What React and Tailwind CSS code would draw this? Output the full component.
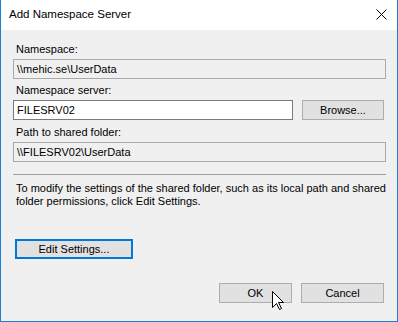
import React from 'react';

const font = { fontFamily: '"Liberation Sans", Arial, sans-serif' };

const Field = ({ label, value, top, children }) => (
    <div className={`flex flex-col ${top}`}>
        <div className="h-[13px] leading-[13px] text-[11px] pl-[3px] mb-[3px]">{label}</div>
        {children || (
            <div className="h-[20px] border border-[#a9a9a9] bg-[#f0f0f0] flex items-center pl-[3px] text-[11px] leading-none">{value}</div>
        )}
    </div>
);

const Button = ({ children, className = '' }) => (
    <button className={`h-[20px] bg-[#e1e1e1] border border-[#adadad] text-[11px] leading-none text-black flex items-center justify-center ${className}`}>
        {children}
    </button>
);

export default function App() {
    return (
        <div className="w-[398px] h-[322px] flex flex-col border-x border-b border-[#1c7fd6] bg-[#f0f0f0] text-black relative" style={font}>
            {/* Title bar */}
            <div className="h-[30px] bg-white flex items-center justify-between pl-[8px] pr-[10px] shrink-0">
                <span className="text-[11.5px]">Add Namespace Server</span>
                <svg width="11" height="11" viewBox="0 0 11 11" className="mt-[-1px]">
                    <path d="M0.5 0.5 L10.5 10.5 M10.5 0.5 L0.5 10.5" stroke="#000" strokeWidth="1" />
                </svg>
            </div>

            {/* Body */}
            <div className="flex flex-col pl-[12px] pr-[11px] pt-[13px]">
                <Field label="Namespace:" value="\\mehic.se\UserData" top="" />

                <Field label="Namespace server:" top="mt-[5px]">
                    <div className="flex items-center gap-[9px]">
                        <div className="w-[280px] h-[20px] border border-[#7a7a7a] bg-white flex items-center pl-[3px] text-[11px] leading-none">FILESRV02</div>
                        <Button className="w-[82px]">Browse...</Button>
                    </div>
                </Field>

                <Field label="Path to shared folder:" value="\\FILESRV02\UserData" top="mt-[6px]" />

                <div className="mt-[12px] h-px bg-[#a0a0a0]"></div>

                <p className="mt-[7px] pl-[3px] text-[11px] leading-[13px]">
                    To modify the settings of the shared folder, such as its local path and shared folder permissions, click Edit Settings.
                </p>

                <div className="mt-[31px] pl-[2px]">
                    <button className="w-[118px] h-[20px] bg-[#e1e1e1] border-2 border-[#0078d7] text-[11px] leading-none flex items-center justify-center">
                        Edit Settings...
                    </button>
                </div>

                <div className="mt-[24px] flex justify-end gap-[9px] pr-[2px]">
                    <Button className="w-[73px]">OK</Button>
                    <Button className="w-[83px]">Cancel</Button>
                </div>
            </div>

            {/* Mouse cursor */}
            <svg width="13" height="20" viewBox="0 0 13 20" className="absolute left-[271px] top-[291px]">
                <path d="M0.5 0.5 L0.5 16.5 L4.5 12.5 L7.5 18.5 L9.5 17.5 L6.5 11.5 L11.5 11.5 Z" fill="#fff" stroke="#000" strokeWidth="1" strokeLinejoin="miter" />
            </svg>
        </div>
    );
}
